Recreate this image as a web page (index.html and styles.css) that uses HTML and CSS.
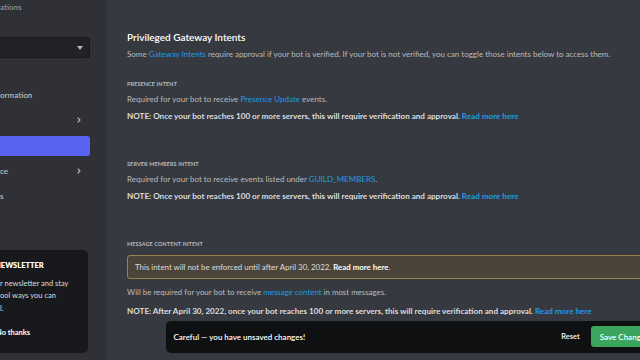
FILE: index.html
```html
<!DOCTYPE html>
<html lang="en">
<head>
<meta charset="utf-8">
<title>Bot - Privileged Gateway Intents</title>
<link rel="stylesheet" href="styles.css">
</head>
<body>
<div class="app">
  <aside class="sidebar">
    <div class="crumb">ations</div>
    <div class="select">
      <svg class="caret" width="6" height="4" viewBox="0 0 6 4"><path d="M0 0H6L3 4Z" fill="#b9bbbe"/></svg>
    </div>
    <nav class="nav">
      <div class="nav-item">ormation</div>
      <div class="nav-item"><span></span><svg class="chev" width="4" height="6" viewBox="0 0 4 6"><path d="M0.7 0.6L3 3L0.7 5.4" fill="none" stroke="#b9bbbe" stroke-width="1.1"/></svg></div>
      <div class="nav-item active"></div>
      <div class="nav-item"><span>ce</span><svg class="chev" width="4" height="6" viewBox="0 0 4 6"><path d="M0.7 0.6L3 3L0.7 5.4" fill="none" stroke="#b9bbbe" stroke-width="1.1"/></svg></div>
      <div class="nav-item">s</div>
    </nav>
    <div class="news">
      <div class="news-title">NEWSLETTER</div>
      <p class="news-text">r newsletter and stay<br>ool ways you can<br>l.</p>
      <div class="news-dismiss">No thanks</div>
    </div>
  </aside>

  <main class="content">
    <h2 class="title">Privileged Gateway Intents</h2>
    <p class="desc">Some <a class="link">Gateway Intents</a> require approval if your bot is verified. If your bot is not verified, you can toggle those intents below to access them.</p>

    <section class="intent">
      <h3 class="label">PRESENCE INTENT</h3>
      <p class="desc">Required for your bot to receive <a class="link">Presence Update</a> events.</p>
      <p class="note">NOTE: Once your bot reaches 100 or more servers, this will require verification and approval. <a class="link">Read more here</a></p>
    </section>

    <section class="intent">
      <h3 class="label">SERVER MEMBERS INTENT</h3>
      <p class="desc">Required for your bot to receive events listed under <a class="link">GUILD_MEMBERS</a>.</p>
      <p class="note">NOTE: Once your bot reaches 100 or more servers, this will require verification and approval. <a class="link">Read more here</a></p>
    </section>

    <section class="intent">
      <h3 class="label">MESSAGE CONTENT INTENT</h3>
      <div class="warning">This intent will not be enforced until after April 30, 2022. <strong>Read more here</strong>.</div>
      <p class="desc">Will be required for your bot to receive <a class="link">message content</a> in most messages.</p>
      <p class="note">NOTE: After April 30, 2022, once your bot reaches 100 or more servers, this will require verification and approval. <a class="link">Read more here</a></p>
    </section>

    <div class="unsaved">
      <span class="unsaved-text">Careful — you have unsaved changes!</span>
      <button class="btn-reset">Reset</button>
      <button class="btn-save">Save Changes</button>
    </div>
  </main>
</div>
</body>
</html>
```

FILE: styles.css
```css
* { box-sizing: border-box; }
html, body {
  margin: 0;
  padding: 0;
  width: 640px;
  height: 360px;
  overflow: hidden;
  background: #36393f;
  font-family: Lato, "Noto Sans", "Liberation Sans", sans-serif;
}
.app {
  display: flex;
  height: 360px;
}
.sidebar {
  width: 106px;
  flex: none;
  background: #2f3136;
  display: flex;
  flex-direction: column;
  overflow: hidden;
}
.crumb {
  height: 15px;
  line-height: 15px;
  font-size: 8px;
  font-weight: 600;
  color: #8e9297;
}
.select {
  margin-top: 22px;
  width: 90px;
  height: 21px;
  background: #202225;
  border: 1px solid #18191c;
  border-left: none;
  border-radius: 0 3px 3px 0;
  display: flex;
  align-items: center;
  justify-content: flex-end;
  padding-right: 6px;
}
.caret { display: block; }
.nav {
  margin-top: 27px;
  display: flex;
  flex-direction: column;
  gap: 5.3px;
  width: 90px;
}
.nav-item {
  height: 20px;
  display: flex;
  align-items: center;
  justify-content: space-between;
  padding-right: 9px;
  font-size: 8px;
  font-weight: 600;
  color: #b9bbbe;
}
.nav-item.active {
  background: #5865f2;
  border-radius: 0 3px 3px 0;
}
.chev { display: block; }
.news {
  margin-top: 44px;
  width: 88px;
  height: 103px;
  background: #18191c;
  border-radius: 0 5px 5px 0;
  padding-top: 11px;
  color: #dcddde;
}
.news-title {
  font-size: 7.5px;
  font-weight: 800;
  line-height: 10px;
  color: #fff;
  margin-left: -5px;
}
.news-text {
  margin: 7px 0 0;
  font-size: 7.5px;
  line-height: 12.3px;
}
.news-dismiss {
  margin-top: 13px;
  margin-left: -4px;
  font-size: 7.5px;
  font-weight: 700;
  color: #fff;
}

.content {
  position: relative;
  flex: none;
  width: 560px;
  padding: 30px 0 0 21px;
}
.title {
  margin: 0;
  font-size: 10px;
  line-height: 14px;
  font-weight: 600;
  color: #fff;
}
.desc {
  margin: 5px 0 0;
  font-size: 8px;
  line-height: 10px;
  color: #b9bbbe;
}
.link {
  color: #1c9ce6;
}
.intent {
  display: flex;
  flex-direction: column;
}
.intent:nth-of-type(1) { margin-top: 20.5px; }
.intent + .intent { margin-top: 39.5px; }
.label {
  margin: 0;
  font-size: 5.5px;
  line-height: 8px;
  font-weight: 700;
  color: #b9bbbe;
  letter-spacing: 0.1px;
}
.intent .desc { margin-top: 6.8px; }
.note {
  margin: 6.7px 0 0;
  font-size: 8.1px;
  line-height: 10px;
  font-weight: 700;
  color: #dcddde;
}
.note .link { font-weight: 700; }
.intent:nth-of-type(2) .desc { margin-top: 5.8px; }
.warning {
  margin-top: 6.5px;
  height: 24px;
  display: flex;
  align-items: center;
  padding-left: 7px;
  background: #4a443b;
  border: 1px solid #9c7f4f;
  border-radius: 3px;
  font-size: 7.9px;
  color: #dcddde;
}
.warning strong { font-weight: 700; margin-left: 2px; color: #fff; }
.warning + .desc { margin-top: 7.7px; }
.warning ~ .note { margin-top: 9px; }
.warning + .desc { font-size: 7.9px; }

.unsaved {
  position: absolute;
  left: 59.5px;
  top: 321px;
  width: 520px;
  height: 31.5px;
  background: #0f1012;
  border-radius: 5px;
  display: flex;
  align-items: center;
  padding: 0 8px;
}
.unsaved-text {
  flex: 1;
  font-size: 8px;
  font-weight: 600;
  color: #fff;
}
.btn-reset {
  background: none;
  border: none;
  padding: 0;
  font-family: inherit;
  font-size: 7.5px;
  font-weight: 600;
  color: #fff;
  margin-right: 11px;
}
.btn-save {
  height: 21px;
  padding: 0 9px;
  border: none;
  border-radius: 3px;
  background: #3ba55d;
  font-family: inherit;
  font-size: 8px;
  font-weight: 600;
  color: #fff;
  margin-right: 20px;
}
```
